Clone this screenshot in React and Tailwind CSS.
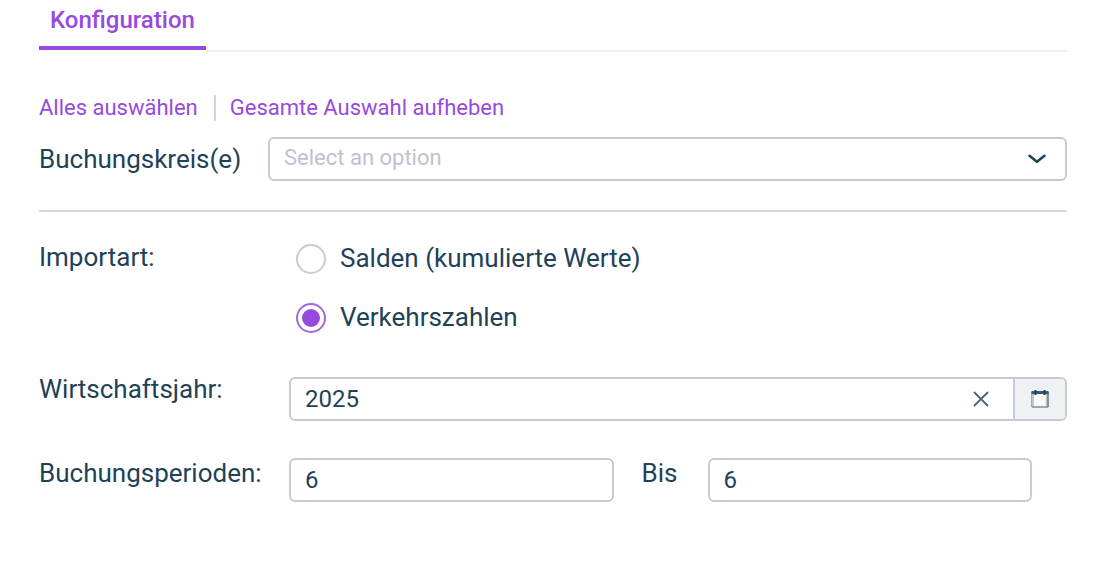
import React, { useState } from 'react';

const inputBase =
    'h-11 rounded-md border-2 border-[#c3ccd4] bg-white px-3.5 text-2xl text-[#1f4257] outline-none';

function ChevronIcon() {
    return (
        <svg viewBox="0 0 20 12" className="h-3 w-5" fill="none" stroke="#1f4257" strokeWidth="2.6" strokeLinecap="round" strokeLinejoin="round">
            <path d="M2.5 2.8 L10 8.8 L17.5 2.8" />
        </svg>
    );
}

function CloseIcon() {
    return (
        <svg viewBox="0 0 16 16" className="h-4 w-4" fill="none" stroke="#4a6577" strokeWidth="1.8" strokeLinecap="round">
            <path d="M1.5 1.5 L14.5 14.5 M14.5 1.5 L1.5 14.5" />
        </svg>
    );
}

function CalendarIcon() {
    return (
        <svg viewBox="0 0 20 20" className="h-5 w-5" fill="none">
            <rect x="3" y="5" width="14" height="12" fill="#f8f9fa" />
            <path d="M1.8 3 V18" stroke="#c4957f" strokeWidth="1.4" />
            <path d="M3.2 5 V17" stroke="#8fd3ee" strokeWidth="1.4" />
            <path d="M16.4 5 V17" stroke="#e3c48d" strokeWidth="1.4" />
            <path d="M18 3 V18" stroke="#4b93cf" strokeWidth="1.8" />
            <path d="M2 18 H18" stroke="#7c8f9c" strokeWidth="1.6" />
            <path d="M1.5 3.5 H18.5" stroke="#3b5768" strokeWidth="3" />
            <path d="M5.5 1 V6 M14.5 1 V6" stroke="#1f4257" strokeWidth="2" />
        </svg>
    );
}

function RadioOption({ label, value, checked, onChange }) {
    return (
        <label className="flex items-center gap-3.5">
            <input
                type="radio"
                name="importart"
                value={value}
                checked={checked}
                onChange={() => onChange(value)}
                className="peer sr-only"
            />
            <span className="mt-0.5 flex size-[30px] items-center justify-center rounded-full border-2 border-[#c9cbdb] bg-white peer-checked:border-[#a566e4]">
                {checked && <span className="size-[18px] rounded-full bg-[#984adf]"></span>}
            </span>
            <span>{label}</span>
        </label>
    );
}

function App() {
    const [company, setCompany] = useState('');
    const [importType, setImportType] = useState('verkehrszahlen');
    const [year, setYear] = useState('2025');
    const [from, setFrom] = useState('6');
    const [to, setTo] = useState('6');

    return (
        <main className="bg-white pr-[29px] pl-[39px] font-['Roboto',sans-serif] text-[26px] leading-8 text-[#1f4257]">
            {/* Tabs */}
            <div role="tablist" className="flex items-start">
                <button
                    type="button"
                    role="tab"
                    aria-selected="true"
                    className="h-[50px] border-b-4 border-[#984adf] px-[11px] pb-1.5 text-2xl font-medium text-[#984adf]"
                >
                    Konfiguration
                </button>
                <div className="h-[52px] flex-1 border-b-2 border-[#ededf2]"></div>
            </div>

            {/* Selection shortcuts */}
            <div className="mt-10 flex h-8 items-center text-[22px] text-[#984adf]">
                <button type="button">Alles auswählen</button>
                <span className="mr-3.5 ml-4 h-[26px] border-l-2 border-[#d3d5e0]"></span>
                <button type="button">Gesamte Auswahl aufheben</button>
            </div>

            <div className="mt-[13px] flex items-center">
                <label htmlFor="company" className="w-[229px] shrink-0">Buchungskreis(e)</label>
                <div className="relative flex-1">
                    <select
                        id="company"
                        value={company}
                        onChange={(e) => setCompany(e.target.value)}
                        className="h-11 w-full appearance-none rounded-md border-2 border-[#c3ccd4] bg-white px-3.5 pb-0.5 text-[22px] text-[#bfc1d1] outline-none"
                    >
                        <option value="">Select an option</option>
                    </select>
                    <span className="pointer-events-none absolute inset-y-0 right-5 flex items-center">
                        <ChevronIcon />
                    </span>
                </div>
            </div>

            <hr className="mt-[29px] border-t-2 border-[#d3d5e0]" />

            {/* Import type */}
            <fieldset className="mt-[29px] flex items-start">
                <legend className="float-left w-[257px]">Importart:</legend>
                <div className="flex flex-col gap-[27px] pt-px">
                    <RadioOption
                        label="Salden (kumulierte Werte)"
                        value="salden"
                        checked={importType === 'salden'}
                        onChange={setImportType}
                    />
                    <RadioOption
                        label="Verkehrszahlen"
                        value="verkehrszahlen"
                        checked={importType === 'verkehrszahlen'}
                        onChange={setImportType}
                    />
                </div>
            </fieldset>

            {/* Fiscal year */}
            <div className="mt-10 flex items-start">
                <label htmlFor="year" className="w-[250px] shrink-0">Wirtschaftsjahr:</label>
                <div className="mt-1 flex h-11 flex-1 overflow-hidden rounded-md border-2 border-[#c3ccd4]">
                    <input
                        id="year"
                        type="text"
                        value={year}
                        onChange={(e) => setYear(e.target.value)}
                        className="min-w-0 flex-1 px-3.5 text-2xl outline-none"
                    />
                    <button type="button" aria-label="Löschen" onClick={() => setYear('')} className="px-6">
                        <CloseIcon />
                    </button>
                    <button
                        type="button"
                        aria-label="Kalender"
                        className="flex w-[52px] items-center justify-center border-l-2 border-[#c3ccd4] bg-[#eff1f4]"
                    >
                        <CalendarIcon />
                    </button>
                </div>
            </div>

            {/* Periods */}
            <div className="mt-9 flex items-start pr-[35px]">
                <label htmlFor="from" className="w-[250px] shrink-0">Buchungsperioden:</label>
                <input
                    id="from"
                    type="text"
                    value={from}
                    onChange={(e) => setFrom(e.target.value)}
                    className={`${inputBase} mt-px min-w-0 flex-1`}
                />
                <label htmlFor="to" className="w-[94px] shrink-0 pl-7">Bis</label>
                <input
                    id="to"
                    type="text"
                    value={to}
                    onChange={(e) => setTo(e.target.value)}
                    className={`${inputBase} mt-px min-w-0 flex-1`}
                />
            </div>
        </main>
    );
}

export default App;
